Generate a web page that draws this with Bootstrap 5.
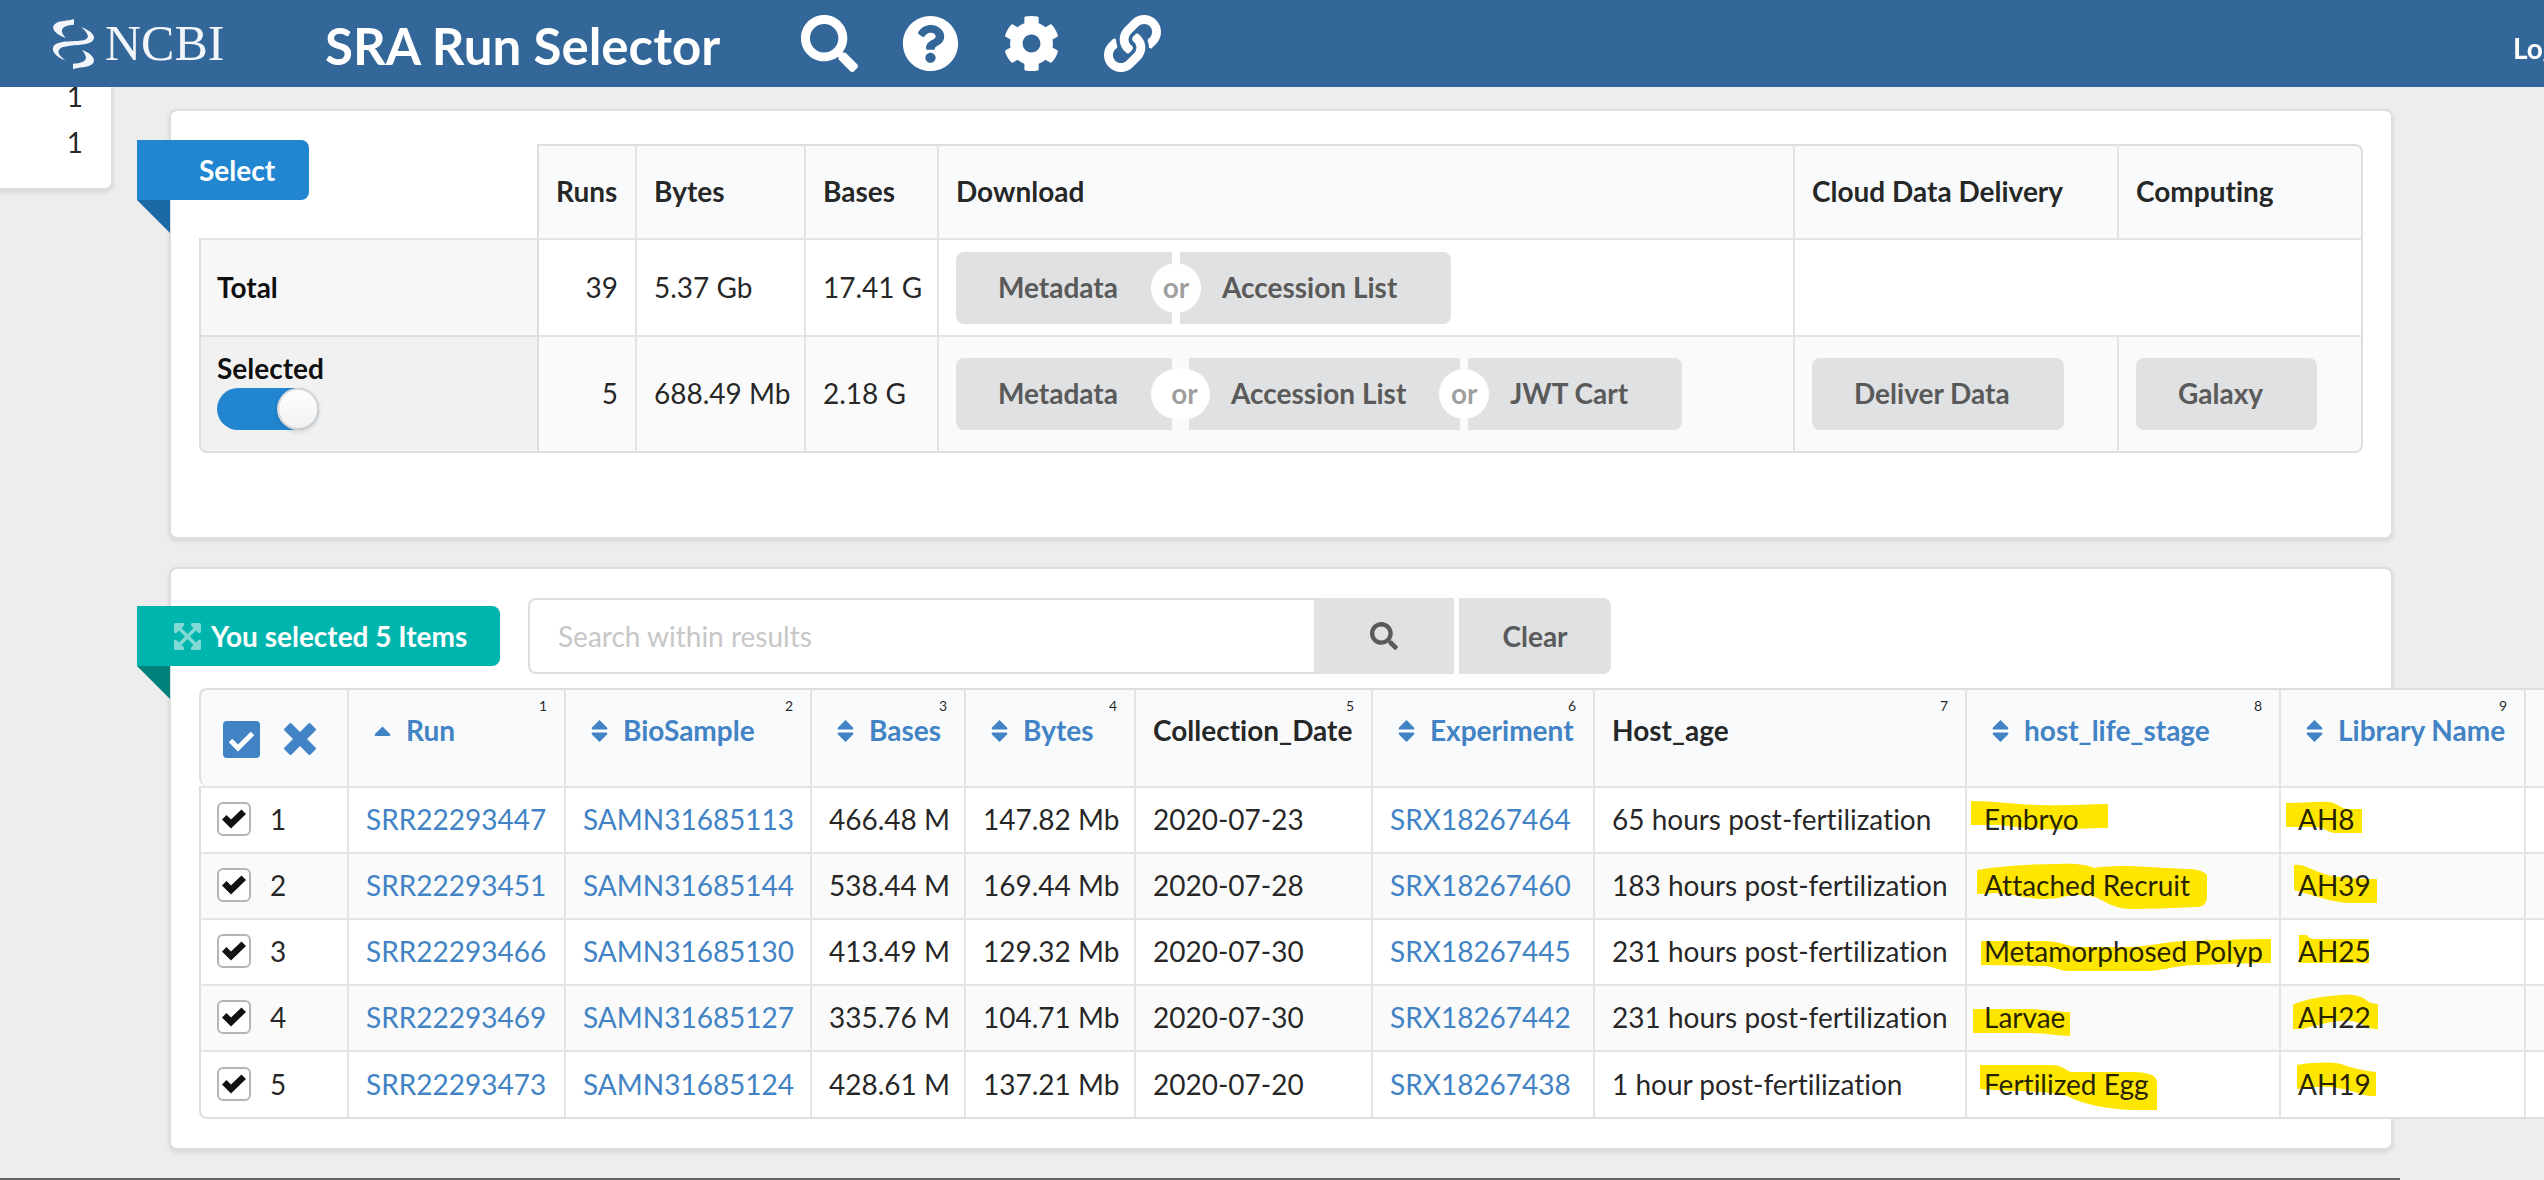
<!DOCTYPE html>
<html lang="en">
<head>
<meta charset="utf-8">
<meta name="viewport" content="width=device-width, initial-scale=1">
<title>SRA Run Selector</title>
<link href="https://cdn.jsdelivr.net/npm/bootstrap@5.3.0/dist/css/bootstrap.min.css" rel="stylesheet">
<style>
  :root { --line: #dedede; --line-soft: #e4e4e4; --blue: #2185d0; --link: #4183c4; --grey: #e0e1e2; }
  html, body { overflow-x: clip; }
  body { font-family: Lato, sans-serif; font-size: 28px; line-height: 40px; color: rgba(0,0,0,.87); background: #ededed; font-variant-ligatures: none; }
  a { color: var(--link); text-decoration: none; }

  .topbar { height: 87px; background: #336699; z-index: 5; }
  .topbar .brand-logo { width: 172px; margin: 0 0 0 51px; color: #f2f6fa; font: 50px/87px "Liberation Serif", serif; }
  .topbar .brand-logo:hover { color: #fff; }
  .app-title { margin: 0 0 0 102px; padding-top: 4px; font-size: 51px; font-weight: 700; line-height: 83px; color: #fff; }
  .tools { margin-left: 81px; gap: 44px; }
  .tool-link svg { width: 57px; height: 57px; display: block; }
  .login-link { width: 31px; padding-top: 8px; color: #fff; font-weight: 700; }

  .facet-panel { width: 113px; border: 2px solid var(--line); border-width: 0 2px 2px 0; border-bottom-right-radius: 8px; box-shadow: 0 2px 4px rgba(34,36,38,.12); }
  .facet-panel ul { margin: -14px 28px 23px 0; line-height: 46px; }
  .page-main { margin: 22px 151px 0 56px; min-width: 0; }
  .panel { border: 2px solid var(--line); border-radius: 8px; box-shadow: 0 2px 4px rgba(34,36,38,.12); }
  .panel + .panel { margin-top: 28px; }
  .panel-summary { padding: 33px 28px 84px; }
  .panel-results { padding: 29px 28px; }

  .ribbon { position: relative; height: 60px; line-height: 60px; color: #fff; font-weight: 700; border-radius: 0 8px 8px 0; background: var(--ribbon); }
  .ribbon::after { content: ""; position: absolute; left: 0; top: 100%; border-style: solid; border-width: 0 33px 33px 0; border-color: transparent var(--ribbon-dark) transparent transparent; }
  .ribbon-select { --ribbon: #2185d0; --ribbon-dark: #1a69a4; position: absolute; top: 29px; left: -34px; width: 172px; padding-left: 62px; }
  .ribbon-items { --ribbon: #00b5ad; --ribbon-dark: #00827c; margin-left: -62px; width: 363px; padding-left: 37px; }
  .ribbon-items svg { width: 27px; height: 27px; margin-right: 10px; color: #80dad6; }

  table.grid { table-layout: fixed; width: 100%; border-collapse: separate; border-spacing: 0; color: inherit; }
  table.grid tr > * { border: 0 solid var(--line-soft); border-width: 2px 0 0 2px; padding: 0 17px 2px; background: #fff; box-shadow: none; color: inherit; vertical-align: middle; white-space: nowrap; }
  table.grid tr > :first-child { border-left-color: var(--line); padding-left: 16px; }
  table.grid tr > td.has-buttons { padding-bottom: 0; }
  table.grid thead th { background: #f9fafb; border-top-color: var(--line); }
  table.grid tr > :last-child { border-right: 2px solid var(--line); }
  table.grid tr:last-child > td, table.grid tbody tr:last-child > th { border-bottom: 2px solid var(--line); }
  table.grid tbody tr:nth-child(even) > * { background: #fafafa; }
  table.grid tr:last-child > :first-child { border-bottom-left-radius: 8px; }

  .summary thead tr { height: 94px; }
  .summary tbody tr:first-child { height: 97px; }
  .summary tbody tr:last-child { height: 118px; }
  table.summary thead th:first-child { border-color: transparent; background: #fff; border-radius: 0; }
  table.summary thead th:nth-child(2) { border-left-color: var(--line); }
  table.summary thead th:last-child { border-top-right-radius: 8px; }
  table.summary tbody tr:last-child td:last-child { border-bottom-right-radius: 8px; }
  table.summary tbody th { background: #f7f7f7; color: rgba(0,0,0,.95); }
  table.summary tbody tr:nth-child(2) > th { background: #f1f1f1; border-top-color: var(--line); padding-bottom: 10px; }
  table.summary tbody tr td:nth-child(2) { border-left-color: var(--line); }

  .btn-plain { height: 72px; padding: 0 54px 2px 42px; border: 0; border-radius: 8px; background: var(--grey); color: #5a5a5a; font: inherit; font-weight: 700; white-space: nowrap; }
  .btn-plain:hover { background: #cacbcd; color: #444; }
  .or-chain { height: 72px; }
  .or-chain .btn-plain:not(:last-child) { border-top-right-radius: 0; border-bottom-right-radius: 0; }
  .or-chain .btn-plain:not(:first-child) { border-top-left-radius: 0; border-bottom-left-radius: 0; }
  .or-mark { position: relative; width: 8px; height: 72px; }
  .or-mark span { position: absolute; left: -21px; right: -21px; top: 11px; height: 50px; border-radius: 25px; background: #fff; color: rgba(0,0,0,.4); font-weight: 700; line-height: 48px; text-align: center; }
  .or-mark-wide { width: 17px; }
  .or-mark-wide span { padding-left: 8px; }

  input.slide-switch[type=checkbox] { width: 102px; height: 42px; margin: 0; border: 0; border-radius: 21px; background: var(--blue); position: relative; float: none; display: block; }
  input.slide-switch::before { content: ""; position: absolute; right: 0; top: 0; width: 42px; height: 42px; border-radius: 50%; background: linear-gradient(#fff, #f1f1f1); box-shadow: 0 2px 4px rgba(34,36,38,.15), inset 0 0 0 2px rgba(34,36,38,.15); }

  .search-form { margin-left: 28px; }
  .search-box { width: 786px; height: 76px; border: 2px solid var(--line); border-right: 0; border-radius: 8px 0 0 8px; padding: 0 28px; font: inherit; }
  .search-box::placeholder { color: #c7c7c7; opacity: 1; }
  .btn-find { width: 140px; height: 76px; padding: 0; border-radius: 0; }
  .btn-find svg { width: 28px; height: 28px; display: block; margin: auto; }
  .btn-clear { width: 152px; height: 76px; padding: 0; margin-left: 5px; border-radius: 0 8px 8px 0; }

  .results { margin-top: 14px; }
  .results thead tr { height: 98px; }
  .results tbody tr { height: 66px; }
  .results tbody tr:last-child { height: 69px; }
  table.results thead th { vertical-align: top; }
  table.results thead th:first-child { vertical-align: middle; border-top-left-radius: 8px; padding: 2px 0 0 22px; }
  .col-num { display: block; font-size: 14px; font-weight: 400; line-height: 20px; padding-top: 6px; text-align: right; }
  .col-name { display: flex; line-height: 28px; }
  .col-name svg { width: 17px; height: 22px; margin: 4px 15px 0 8px; }
  .icon-act { border: 0; padding: 0; background: none; color: var(--link); line-height: 0; }
  .row-label { display: flex; align-items: center; gap: 19px; }
  input.row-tick[type=checkbox] { width: 34px; height: 34px; margin: 0; border: 2px solid #b5b5b5; border-radius: 6px; background-color: #fff; background-size: 24px 24px; }
  input.row-tick[type=checkbox]:checked { background-image: url("data:image/svg+xml,%3csvg xmlns='http://www.w3.org/2000/svg' viewBox='0 0 24 24'%3e%3cpath fill='%23111' d='M0 12.5 4.5 8 9 12.5 19.5 2.5 24 7 9 21.5z'/%3e%3c/svg%3e"); }
  td.marked { position: relative; }
  td.marked svg { position: absolute; left: 0; top: 0; width: 310px; height: 66px; fill: #ffe600; }
  td.marked span { position: relative; }
  .page-foot { height: 2px; margin: 28px 144px 0 0; background: #666; }
</style>
<script src="https://cdn.jsdelivr.net/npm/bootstrap@5.3.0/dist/js/bootstrap.bundle.min.js"></script>
</head>
<body>
<svg class="d-none" aria-hidden="true">
  <symbol id="i-search" viewBox="0 0 512 512"><path fill="currentColor" d="M505 442.700L405.300 343c-4.500-4.500-10.600-7-17-7H372c27.600-35.300 44-79.700 44-128C416 93.100 322.900 0 208 0S0 93.100 0 208s93.100 208 208 208c48.300 0 92.700-16.400 128-44v16.300c0 6.400 2.500 12.500 7 17l99.700 99.700c9.400 9.400 24.600 9.400 33.900 0l28.300-28.300c9.400-9.400 9.400-24.600.1-34zM208 336c-70.700 0-128-57.200-128-128 0-70.700 57.200-128 128-128 70.700 0 128 57.200 128 128 0 70.700-57.200 128-128 128z"/></symbol>
  <symbol id="i-help" viewBox="0 0 512 512"><path fill="currentColor" d="M504 256c0 136.997-111.043 248-248 248S8 392.997 8 256C8 119.083 119.043 8 256 8s248 111.083 248 248zM262.655 90c-54.497 0-89.255 22.957-116.549 63.758-3.536 5.286-2.353 12.415 2.715 16.258l34.699 26.310c5.205 3.947 12.621 3.008 16.665-2.122 17.864-22.658 30.113-35.797 57.303-35.797 20.429 0 45.698 13.148 45.698 32.958 0 14.976-12.363 22.667-32.534 33.976C247.128 238.528 216 254.941 216 296v4c0 6.627 5.373 12 12 12h56c6.627 0 12-5.373 12-12v-1.333c0-28.462 83.186-29.647 83.186-106.667 0-58.002-60.165-102-116.531-102zM256 338c-25.365 0-46 20.635-46 46 0 25.364 20.635 46 46 46s46-20.636 46-46c0-25.365-20.635-46-46-46z"/></symbol>
  <symbol id="i-cog" viewBox="0 0 512 512"><path fill="currentColor" d="M487.400 315.700l-42.600-24.600c4.300-23.200 4.300-47 0-70.200l42.600-24.600c4.900-2.800 7.100-8.600 5.500-14-11.100-35.600-30-67.800-54.700-94.600-3.800-4.100-10-5.100-14.800-2.300L380.800 110c-17.900-15.400-38.500-27.300-60.800-35.100V25.800c0-5.600-3.900-10.500-9.400-11.700-36.700-8.200-74.300-7.800-109.200 0-5.500 1.200-9.400 6.100-9.400 11.700V75c-22.200 7.900-42.800 19.800-60.800 35.100L88.700 85.500c-4.900-2.800-11-1.900-14.800 2.300-24.700 26.700-43.600 58.900-54.700 94.600-1.700 5.400.6 11.200 5.500 14L67.300 221c-4.300 23.200-4.300 47 0 70.200l-42.600 24.600c-4.900 2.800-7.100 8.600-5.500 14 11.100 35.600 30 67.800 54.700 94.600 3.800 4.100 10 5.100 14.800 2.300l42.600-24.600c17.900 15.400 38.500 27.300 60.800 35.100v49.200c0 5.600 3.900 10.500 9.400 11.700 36.700 8.200 74.300 7.800 109.200 0 5.500-1.200 9.400-6.100 9.400-11.700v-49.200c22.200-7.900 42.800-19.800 60.800-35.100l42.600 24.600c4.900 2.800 11 1.900 14.800-2.300 24.700-26.700 43.600-58.900 54.700-94.600 1.500-5.500-.7-11.300-5.600-14.100zM256 336c-44.100 0-80-35.900-80-80s35.900-80 80-80 80 35.900 80 80-35.900 80-80 80z"/></symbol>
  <symbol id="i-link" viewBox="0 0 512 512"><path fill="currentColor" d="M326.612 185.391c59.747 59.809 58.927 155.698.36 214.590-.11.120-.24.250-.36.370l-67.200 67.200c-59.270 59.270-155.699 59.262-214.960 0-59.270-59.260-59.270-155.700 0-214.960l37.106-37.106c9.840-9.840 26.786-3.300 27.294 10.606.648 17.722 3.826 35.527 9.690 52.721 1.986 5.822.567 12.262-3.783 16.612l-13.087 13.087c-28.026 28.026-28.905 73.660-1.155 101.960 28.024 28.579 74.086 28.749 102.325.510l67.200-67.190c28.191-28.191 28.073-73.757 0-101.830-3.701-3.694-7.429-6.564-10.341-8.569a16.037 16.037 0 0 1-6.947-12.606c-.396-10.567 3.348-21.456 11.698-29.806l21.054-21.055c5.521-5.521 14.182-6.199 20.584-1.731a152.482 152.482 0 0 1 20.522 17.197zM467.547 44.449c-59.261-59.262-155.690-59.270-214.960 0l-67.200 67.200c-.12.120-.25.250-.36.370-58.566 58.892-59.387 154.781.360 214.590a152.454 152.454 0 0 0 20.521 17.196c6.402 4.468 15.064 3.789 20.584-1.731l21.054-21.055c8.350-8.350 12.094-19.239 11.698-29.806a16.037 16.037 0 0 0-6.947-12.606c-2.912-2.005-6.640-4.875-10.341-8.569-28.073-28.073-28.191-73.639 0-101.830l67.200-67.190c28.239-28.239 74.300-28.069 102.325.510 27.750 28.300 26.872 73.934-1.155 101.960l-13.087 13.087c-4.350 4.350-5.769 10.790-3.783 16.612 5.864 17.194 9.042 34.999 9.690 52.721.509 13.906 17.454 20.446 27.294 10.606l37.106-37.106c59.271-59.259 59.271-155.699.001-214.959z"/></symbol>
  <symbol id="i-sort" viewBox="0 0 17 22"><path fill="currentColor" d="M8.500 0 16 7.500Q17 9.500 15 9.500H2Q0 9.500 1 7.500ZM8.500 22 1 14.500Q0 12.500 2 12.500H15Q17 12.500 16 14.500Z"/></symbol>
  <symbol id="i-sort-up" viewBox="0 0 17 22"><path fill="currentColor" d="M8.500 6.500 16 14Q17 16 15 16H2Q0 16 1 14Z"/></symbol>
</svg>

<nav class="topbar navbar flex-nowrap p-0 sticky-top">
  <a class="brand-logo navbar-brand d-flex align-items-center flex-shrink-0 p-0" href="#" aria-label="NCBI">
    <svg class="flex-shrink-0 me-2" width="46" height="52" viewBox="32 24 138 156" fill="#f2f6fa"><path d="M101 27V44C72 46 50 55 76 84C40 70 30 52 45 41C58 31 82 34 101 27ZM122 51C162 66 168 84 154 95C138 107 92 103 66 112C50 119 48 132 76 151C44 140 32 122 40 108C54 88 110 97 134 89C150 82 142 68 122 51ZM98 178V161C130 160 152 150 124 119C158 132 168 150 156 162C142 174 116 170 98 178Z"/></svg><span>NCBI</span>
  </a>
  <h1 class="app-title flex-shrink-0">SRA Run Selector</h1>
  <div class="tools d-flex">
    <a class="tool-link text-white" href="#" aria-label="Search"><svg><use href="#i-search"/></svg></a>
    <a class="tool-link text-white" href="#" aria-label="Help"><svg><use href="#i-help"/></svg></a>
    <a class="tool-link text-white" href="#" aria-label="Settings"><svg><use href="#i-cog"/></svg></a>
    <a class="tool-link text-white" href="#" aria-label="Permalink"><svg><use href="#i-link"/></svg></a>
  </div>
  <a class="login-link ms-auto flex-shrink-0 text-nowrap" href="#">Log in</a>
</nav>

<div class="d-flex align-items-start">
  <aside class="facet-panel bg-white flex-shrink-0">
    <ul class="list-unstyled text-end"><li>1</li><li>1</li></ul>
  </aside>

  <main class="page-main flex-grow-1">
    <section class="panel panel-summary bg-white position-relative">
      <div class="ribbon ribbon-select">Select</div>
      <table class="table grid summary m-0">
        <colgroup><col width="338"><col width="98"><col width="169"><col width="133"><col><col width="324"><col width="246"></colgroup>
        <thead><tr><th></th><th>Runs</th><th>Bytes</th><th>Bases</th><th>Download</th><th>Cloud Data Delivery</th><th>Computing</th></tr></thead>
        <tbody>
          <tr>
            <th scope="row">Total</th><td class="text-end">39</td><td>5.37 Gb</td><td>17.41 G</td>
            <td class="has-buttons"><div class="or-chain d-flex">
              <button class="btn btn-plain" type="button">Metadata</button><div class="or-mark"><span>or</span></div><button class="btn btn-plain" type="button">Accession List</button>
            </div></td>
            <td colspan="2"></td>
          </tr>
          <tr>
            <th scope="row"><label class="d-block" for="only-selected">Selected</label><input class="form-check-input slide-switch" type="checkbox" role="switch" id="only-selected" checked></th>
            <td class="text-end">5</td><td>688.49 Mb</td><td>2.18 G</td>
            <td class="has-buttons"><div class="or-chain d-flex">
              <button class="btn btn-plain" type="button">Metadata</button><div class="or-mark or-mark-wide"><span>or</span></div><button class="btn btn-plain" type="button">Accession List</button><div class="or-mark"><span>or</span></div><button class="btn btn-plain" type="button">JWT Cart</button>
            </div></td>
            <td class="has-buttons"><button class="btn btn-plain d-block" type="button">Deliver Data</button></td>
            <td class="has-buttons"><button class="btn btn-plain d-block" type="button">Galaxy</button></td>
          </tr>
        </tbody>
      </table>
    </section>

    <section class="panel panel-results bg-white">
      <div class="d-flex align-items-center">
        <div class="ribbon ribbon-items d-flex align-items-center">
          <svg viewBox="0 0 27 27"><path fill="currentColor" d="M1.500 0H9Q11 1 9.500 3L7.500 5 13.500 11 19.500 5 17.500 3Q16 1 18 0H25.500Q27 0 27 1.500V9Q26 11 24 9.500L22 7.500 16 13.500 22 19.500 24 17.500Q26 16 27 18V25.500Q27 27 25.500 27H18Q16 26 17.500 24L19.500 22 13.500 16 7.500 22 9.500 24Q11 26 9 27H1.500Q0 27 0 25.500V18Q1 16 3 17.500L5 19.500 11 13.500 5 7.500 3 9.500Q1 11 0 9V1.500Q0 0 1.500 0Z"/></svg>
          <span>You selected 5 Items</span>
        </div>
        <form class="search-form d-flex" onsubmit="return false">
          <input class="search-box" type="text" placeholder="Search within results" aria-label="Search within results">
          <button class="btn btn-plain btn-find" type="button" aria-label="Search"><svg><use href="#i-search"/></svg></button>
          <button class="btn btn-plain btn-clear" type="reset">Clear</button>
        </form>
      </div>

      <table class="table grid results mb-0">
        <colgroup><col width="148"><col width="217"><col width="246"><col width="154"><col width="170"><col width="237"><col width="222"><col width="372"><col width="314"><col width="245"><col width="240"></colgroup>
        <thead><tr>
          <th><div class="d-flex align-items-center">
            <button class="icon-act" type="button" aria-label="Select all"><svg width="37" height="37" viewBox="0 0 37 37"><rect width="37" height="37" rx="4" fill="currentColor"/><path d="M7.500 19.500 15 27 29.500 12.500" fill="none" stroke="#fff" stroke-width="5"/></svg></button>
            <button class="icon-act ms-4" type="button" aria-label="Clear selection"><svg width="32" height="32" viewBox="0 0 32 32"><path fill="currentColor" d="M5.500.5Q6.500-.5 7.500.5L16 9 24.500.5Q25.500-.5 26.500.5L31.500 5.500Q32.500 6.500 31.500 7.500L23 16 31.500 24.500Q32.500 25.500 31.500 26.500L26.500 31.500Q25.500 32.500 24.500 31.500L16 23 7.500 31.500Q6.500 32.500 5.500 31.500L.5 26.500Q-.5 25.500.5 24.500L9 16 .5 7.500Q-.5 6.500.5 5.500Z"/></svg></button>
          </div></th>
          <th><span class="col-num">1</span><a class="col-name" href="#"><svg><use href="#i-sort-up"/></svg>Run</a></th>
          <th><span class="col-num">2</span><a class="col-name" href="#"><svg><use href="#i-sort"/></svg>BioSample</a></th>
          <th><span class="col-num">3</span><a class="col-name" href="#"><svg><use href="#i-sort"/></svg>Bases</a></th>
          <th><span class="col-num">4</span><a class="col-name" href="#"><svg><use href="#i-sort"/></svg>Bytes</a></th>
          <th><span class="col-num">5</span><span class="col-name">Collection_Date</span></th>
          <th><span class="col-num">6</span><a class="col-name" href="#"><svg><use href="#i-sort"/></svg>Experiment</a></th>
          <th><span class="col-num">7</span><span class="col-name">Host_age</span></th>
          <th><span class="col-num">8</span><a class="col-name" href="#"><svg><use href="#i-sort"/></svg>host_life_stage</a></th>
          <th><span class="col-num">9</span><a class="col-name" href="#"><svg><use href="#i-sort"/></svg>Library Name</a></th>
          <th></th>
        </tr></thead>
        <tbody>
          <tr>
            <td><label class="row-label"><input class="form-check-input row-tick" type="checkbox" checked>1</label></td>
            <td><a href="#">SRR22293447</a></td><td><a href="#">SAMN31685113</a></td><td>466.48 M</td><td>147.82 Mb</td><td>2020-07-23</td><td><a href="#">SRX18267464</a></td><td>65 hours post-fertilization</td>
            <td class="marked"><svg><path d="M4 13C30 13 50 17 75 17C100 18 120 16 141 16V40C115 40 95 42 75 41C55 40 45 38 30 37H4Z"/></svg><span>Embryo</span></td>
            <td class="marked"><svg><path d="M5 15C20 15 35 13 48 14C57 15 58 20 67 21H81V45H54C45 44 45 39 33 39H5Z"/></svg><span>AH8</span></td><td></td>
          </tr>
          <tr>
            <td><label class="row-label"><input class="form-check-input row-tick" type="checkbox" checked>2</label></td>
            <td><a href="#">SRR22293451</a></td><td><a href="#">SAMN31685144</a></td><td>538.44 M</td><td>169.44 Mb</td><td>2020-07-28</td><td><a href="#">SRX18267460</a></td><td>183 hours post-fertilization</td>
            <td class="marked"><svg><path d="M10 16C35 12 65 10 91 10C110 9 120 11 127 14C140 12 155 12 163 12C190 13 210 15 224 15Q236 16 240 21V42Q240 53 230 53C205 54 185 55 163 55C145 54 140 48 128 43C115 40 105 41 100 42C90 45 75 46 65 44C50 42 40 39 30 39L10 40Z"/></svg><span>Attached Recruit</span></td>
            <td class="marked"><svg><path d="M13 11Q20 10 28 14C40 19 50 23 60 23C75 25 85 25 96 25V49H67C50 48 40 43 30 41L13 36Z"/></svg><span>AH39</span></td><td></td>
          </tr>
          <tr>
            <td><label class="row-label"><input class="form-check-input row-tick" type="checkbox" checked>3</label></td>
            <td><a href="#">SRR22293466</a></td><td><a href="#">SAMN31685130</a></td><td>413.49 M</td><td>129.32 Mb</td><td>2020-07-30</td><td><a href="#">SRX18267445</a></td><td>231 hours post-fertilization</td>
            <td class="marked"><svg><path d="M14 21H75C95 21 98 26 110 27H163C185 26 200 21 221 21C250 20 280 19 304 19V43C270 43 250 45 229 45C205 46 195 51 179 51H100C90 50 85 46 77 46L14 45Z"/></svg><span>Metamorphosed Polyp</span></td>
            <td class="marked"><svg><path d="M18 15H26Q28 19 33 19H88V43H18Z"/></svg><span>AH25</span></td><td></td>
          </tr>
          <tr>
            <td><label class="row-label"><input class="form-check-input row-tick" type="checkbox" checked>4</label></td>
            <td><a href="#">SRR22293469</a></td><td><a href="#">SAMN31685127</a></td><td>335.76 M</td><td>104.71 Mb</td><td>2020-07-30</td><td><a href="#">SRX18267442</a></td><td>231 hours post-fertilization</td>
            <td class="marked"><svg><path d="M6 23H66C80 24 95 26 103 26V50C85 49 75 47 60 47H6Z"/></svg><span>Larvae</span></td>
            <td class="marked"><svg><path d="M12 20Q12 18 16 17C30 12 45 10 60 9C70 8 80 9 85 14Q90 18 97 18V43Q90 43 87 41C75 35 70 34 60 35C45 36 30 41 21 43H12Z"/></svg><span>AH22</span></td><td></td>
          </tr>
          <tr>
            <td><label class="row-label"><input class="form-check-input row-tick" type="checkbox" checked>5</label></td>
            <td><a href="#">SRR22293473</a></td><td><a href="#">SAMN31685124</a></td><td>428.61 M</td><td>137.21 Mb</td><td>2020-07-20</td><td><a href="#">SRX18267438</a></td><td>1 hour post-fertilization</td>
            <td class="marked"><svg><path d="M13 13H86C98 14 98 19 105 20H155C175 20 190 20 190 31V58H165C140 57 115 52 100 44C85 40 60 39 45 39L13 37Z"/></svg><span>Fertilized Egg</span></td>
            <td class="marked"><svg><path d="M16 13C35 10 50 10 60 12C70 16 85 19 95 20V44Q85 44 80 42C70 38 60 37 52 35C40 34 25 36 16 37Z"/></svg><span>AH19</span></td><td></td>
          </tr>
        </tbody>
      </table>
    </section>
  </main>
</div>
<div class="page-foot"></div>
</body>
</html>
